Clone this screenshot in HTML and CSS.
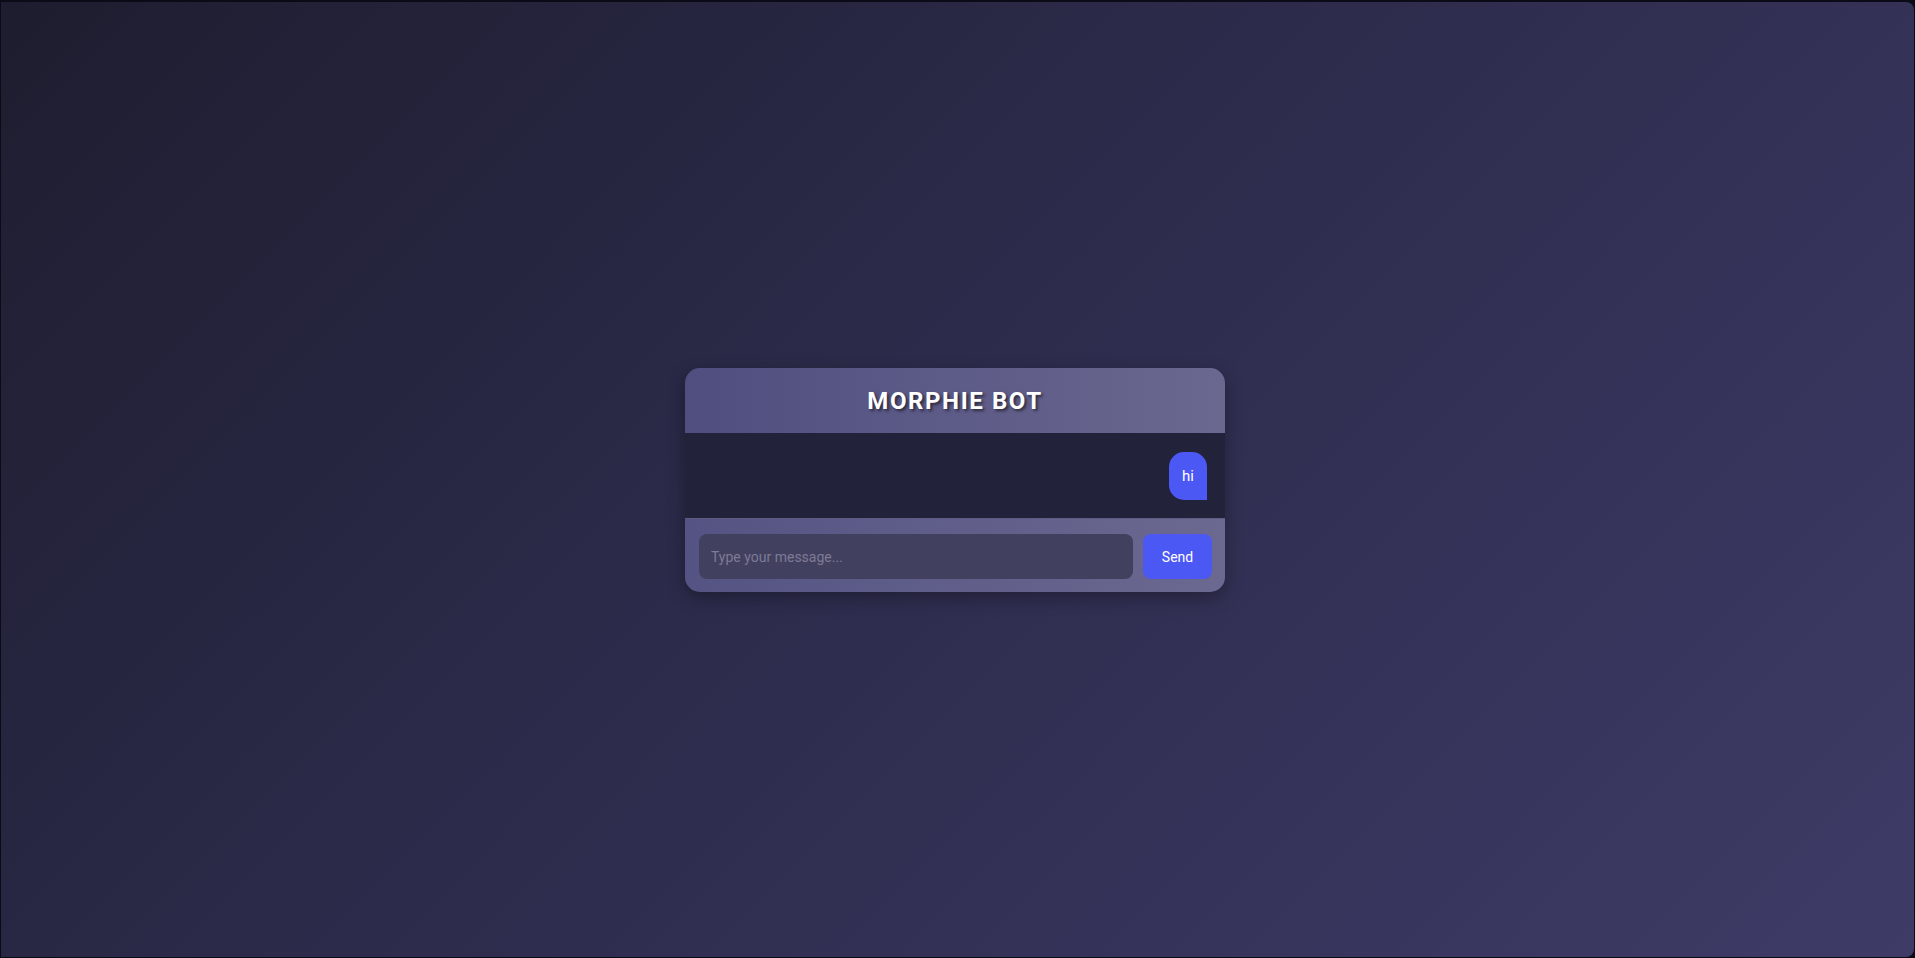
FILE: index.html
```html
<!DOCTYPE html>
<html lang="en">
<head>
<meta charset="utf-8">
<title>Morphie Bot</title>
<link rel="stylesheet" href="styles.css">
</head>
<body>
<div class="page">
  <div class="chat">
    <header class="chat-header">
      <h1 class="chat-title">MORPHIE BOT</h1>
    </header>
    <div class="chat-messages">
      <div class="msg msg-user">hi</div>
    </div>
    <form class="chat-input">
      <input class="chat-field" type="text" placeholder="Type your message...">
      <button class="chat-send" type="button">Send</button>
    </form>
  </div>
</div>
</body>
</html>
```
FILE: styles.css
```css
html {
  margin: 0;
  padding: 0;
  height: 100%;
  background: #0b0b18;
}
body {
  margin: 0;
  padding: 2px 1px 1px 1px;
  height: 100%;
  box-sizing: border-box;
  font-family: Roboto, "Liberation Sans", sans-serif;
}
.page {
  height: 100%;
  border-radius: 0 8px 8px 0;
  background: linear-gradient(135deg, #1e1d2f 0%, #2c2b4b 45%, #3e3b67 100%);
  display: flex;
  align-items: center;
  justify-content: center;
  padding-right: 5px;
  box-sizing: border-box;
}
.chat {
  width: 540px;
  border-radius: 15px;
  overflow: hidden;
  display: flex;
  flex-direction: column;
  box-shadow: 0 6px 18px rgba(0, 0, 0, 0.3);
  margin-top: 1px;
}
.chat-header {
  height: 65px;
  display: flex;
  align-items: center;
  justify-content: center;
  background: linear-gradient(90deg, #504e7f 0%, #6a688f 100%);
}
.chat-title {
  margin: 0;
  color: #ffffff;
  font-size: 24px;
  font-weight: 700;
  letter-spacing: 1.6px;
  text-shadow: 2px 2px 3px rgba(0, 0, 0, 0.55);
}
.chat-messages {
  height: 85px;
  box-sizing: border-box;
  padding: 19px 18px 18px;
  background: #22223a;
  display: flex;
  flex-direction: column;
  align-items: flex-end;
}
.msg {
  font-size: 15px;
  line-height: 20px;
  color: #ffffff;
}
.msg-user {
  background: #4c58f4;
  padding: 14px 13px;
  border-radius: 15px 15px 0 15px;
}
.chat-input {
  margin: 0;
  display: flex;
  gap: 10px;
  padding: 15px 13px 13px 14px;
  border-top: 1px solid #5e5c82;
  background: linear-gradient(90deg, #555383 0%, #6b6990 100%);
}
.chat-field {
  flex: 1;
  height: 45px;
  box-sizing: border-box;
  border: none;
  outline: none;
  border-radius: 8px;
  background: #42405f;
  color: #ffffff;
  padding: 0 12px;
  font-family: Roboto, "Liberation Sans", sans-serif;
  font-size: 14px;
}
.chat-field::placeholder {
  color: #7d7b95;
}
.chat-send {
  width: 69px;
  height: 45px;
  border: none;
  border-radius: 8px;
  background: #4c58f4;
  color: #ffffff;
  font-family: Roboto, "Liberation Sans", sans-serif;
  font-size: 14px;
  cursor: pointer;
}
```
